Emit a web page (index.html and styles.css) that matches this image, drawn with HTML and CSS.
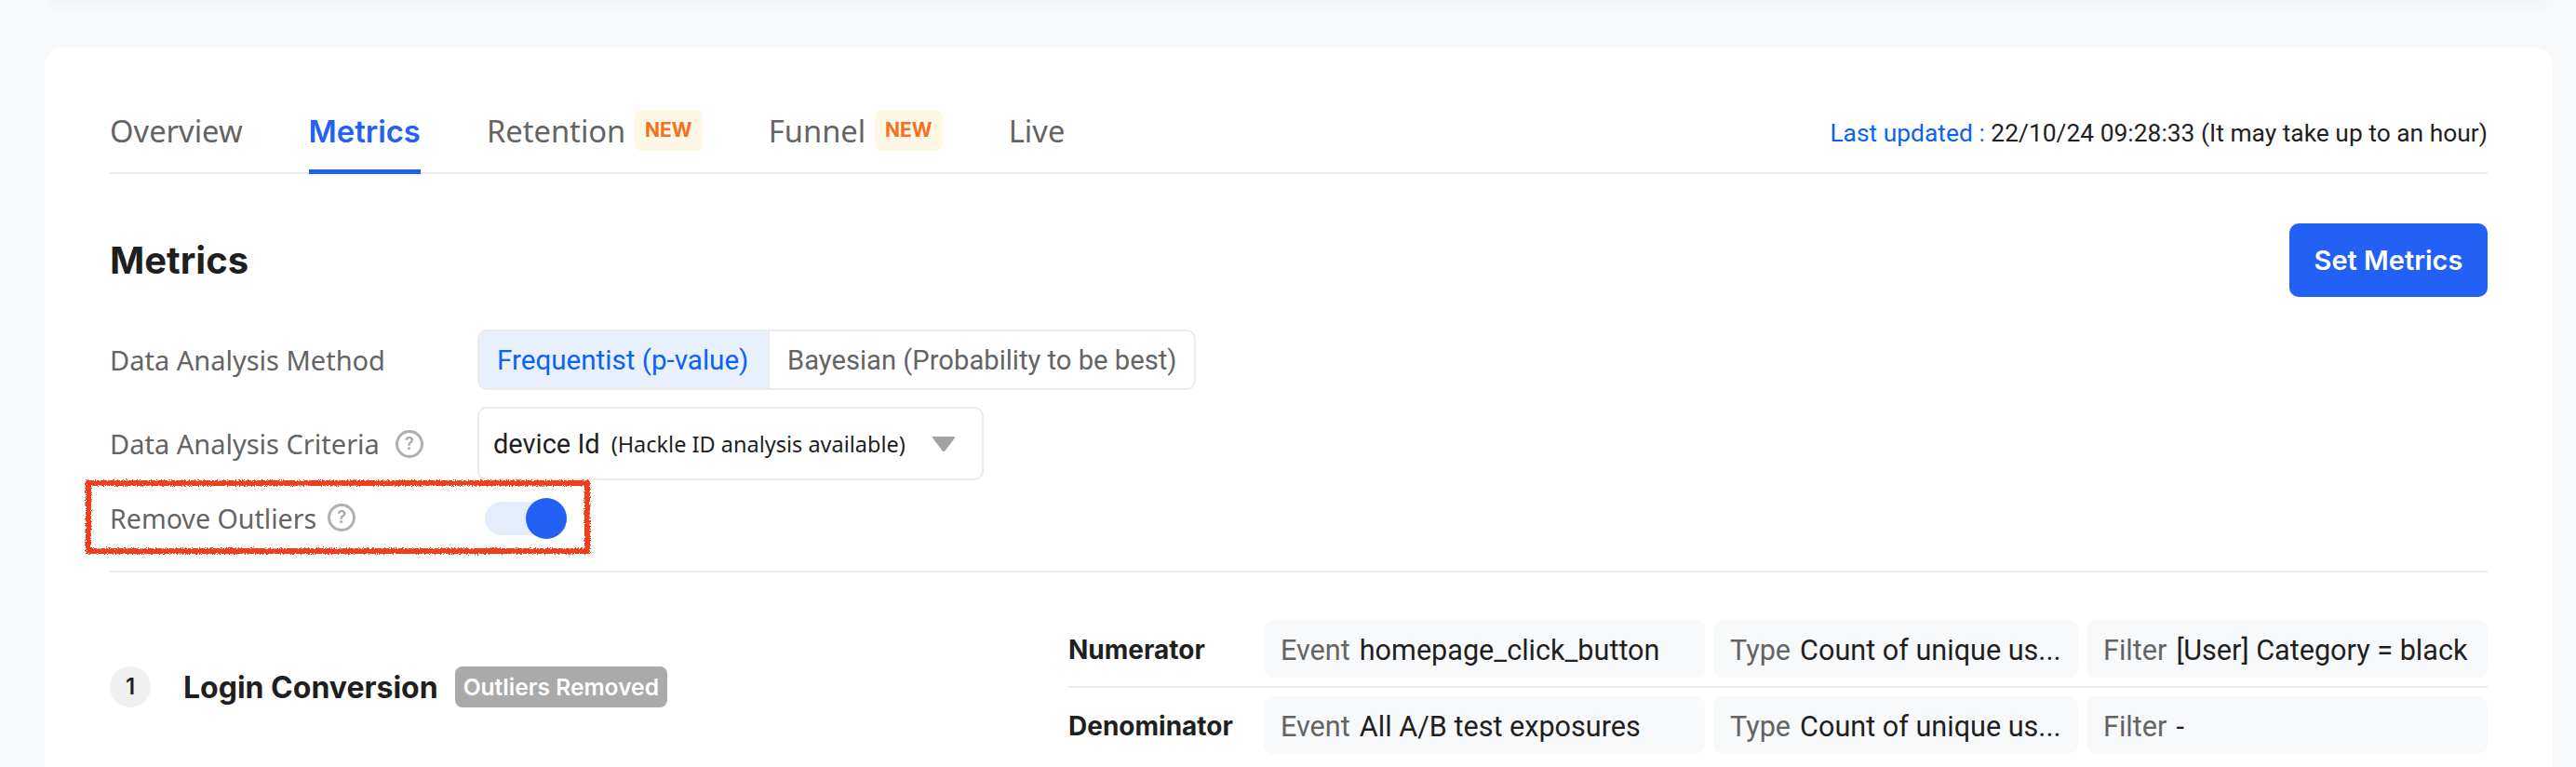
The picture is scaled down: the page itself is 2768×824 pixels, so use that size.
FILE: index.html
```html
<!DOCTYPE html>
<html>
<head>
    <title>Metrics</title>
    <link rel="stylesheet" href="styles.css">
</head>
<body>

<div class="top-strip"></div>

<div class="card">
    <div class="tabs">
        <div class="tab">Overview</div>
        <div class="tab active">Metrics</div>
        <div class="tab">Retention <span class="new-badge">NEW</span></div>
        <div class="tab">Funnel <span class="new-badge">NEW</span></div>
        <div class="tab">Live</div>
        <div class="last-updated"><span class="blue">Last updated : </span>22/10/24 09:28:33 (It may take up to an hour)</div>
    </div>

    <div class="title-row">
        <h1>Metrics</h1>
        <button class="set-btn">Set Metrics</button>
    </div>

    <div class="form-row method-row">
        <div class="form-label">Data Analysis Method</div>
        <div class="segment">
            <div class="segment-item selected">Frequentist (p-value)</div>
            <div class="segment-item">Bayesian (Probability to be best)</div>
        </div>
    </div>

    <div class="form-row criteria-row">
        <div class="form-label">Data Analysis Criteria <span class="help">?</span></div>
        <div class="select">
            <span class="select-main">device Id</span>
            <span class="select-sub">(Hackle ID analysis available)</span>
            <svg class="arrow" width="26" height="18" viewBox="0 0 26 18"><path d="M2 1h22c1 0 1.400 .8 .9 1.600l-10.600 14c-.7 .8-1.900 .8-2.600 0l-10.600-14c-.5-.8-.1-1.600 .9-1.600z" fill="#a3a3a3"/></svg>
        </div>
    </div>

    <div class="form-row outliers-row">
        <div class="form-label">Remove Outliers <span class="help">?</span></div>
        <div class="toggle"><div class="knob"></div></div>
        <svg class="scribble" width="552" height="88" viewBox="0 0 552 88">
            <defs>
                <filter id="rough" x="-2%" y="-10%" width="104%" height="120%">
                    <feTurbulence type="fractalNoise" baseFrequency="0.9" numOctaves="2" seed="4"/>
                    <feDisplacementMap in="SourceGraphic" scale="5"/>
                </filter>
            </defs>
            <rect x="5" y="5" width="536" height="73" fill="none" stroke="#f03c1f" stroke-width="6" filter="url(#rough)"/>
        </svg>
    </div>

    <div class="metric">
        <div class="metric-name">
            <span class="num">1</span>
            <span class="metric-title">Login Conversion</span>
            <span class="removed-badge">Outliers Removed</span>
        </div>
        <div class="metric-detail">
            <div class="detail-row first">
                <div class="detail-label">Numerator</div>
                <div class="chip chip-event"><span class="chip-key">Event</span>homepage_click_button</div>
                <div class="chip chip-type"><span class="chip-key">Type</span>Count of unique us...</div>
                <div class="chip chip-filter"><span class="chip-key">Filter</span>[User] Category = black</div>
            </div>
            <div class="detail-row">
                <div class="detail-label">Denominator</div>
                <div class="chip chip-event"><span class="chip-key">Event</span>All A/B test exposures</div>
                <div class="chip chip-type"><span class="chip-key">Type</span>Count of unique us...</div>
                <div class="chip chip-filter"><span class="chip-key">Filter</span>-</div>
            </div>
        </div>
    </div>
</div>

</body>
</html>
```

FILE: styles.css
```css
html, body {
    height: 824px;
    overflow: hidden;
}

body {
    margin: 0;
    padding: 0 25px 0 48px;
    font-family: Inter, Roboto, "Noto Sans", sans-serif;
    background-color: #f8f9fb;
    color: #1f1f1f;
}

.top-strip {
    height: 0;
    margin: 0 8px;
    box-shadow: 0 0 14px 3px rgba(0, 0, 0, 0.07);
}

.card {
    margin-top: 51px;
    height: 900px;
    padding: 0 70px;
    background-color: #fff;
    border-radius: 20px 20px 0 0;
}

.tabs {
    display: flex;
    align-items: center;
    gap: 71px;
    height: 136px;
    padding-top: 44px;
    box-sizing: border-box;
    border-bottom: 2px solid #ececec;
}

.tab {
    display: flex;
    align-items: center;
    gap: 1px;
    height: 90px;
    box-sizing: border-box;
    font-family: "Noto Sans", sans-serif;
    font-size: 32.7px;
    color: #646464;
    white-space: pre;
}

.tab.active {
    height: 92px;
    margin-bottom: -2px;
    font-family: Inter, sans-serif;
    font-size: 32.8px;
    font-weight: 600;
    color: #2260f6;
    border-bottom: 5px solid #2260f6;
    padding-top: 5px;
}

.new-badge {
    width: 73px;
    height: 44px;
    line-height: 44px;
    text-align: center;
    font-family: Inter, sans-serif;
    font-size: 21px;
    font-weight: 700;
    color: #f5701f;
    background-color: #fff7e5;
    border-radius: 8px;
}

.last-updated {
    margin-left: auto;
    padding-top: 5px;
    font-family: Roboto, sans-serif;
    font-size: 26.4px;
    color: #1f1f1f;
}

.blue {
    color: #0b63f3;
}

.title-row {
    display: flex;
    justify-content: space-between;
    align-items: center;
    margin-top: 53px;
}

h1 {
    margin: 0;
    font-size: 40px;
    font-weight: 700;
}

.set-btn {
    width: 213px;
    height: 79px;
    font-family: inherit;
    font-size: 29px;
    font-weight: 600;
    color: #fff;
    border: none;
    border-radius: 10px;
    background-color: #2260f6;
}

.form-row {
    display: flex;
    align-items: center;
    position: relative;
}

.form-label {
    display: flex;
    align-items: center;
    gap: 12px;
    width: 395px;
    font-family: "Noto Sans", sans-serif;
    font-size: 29px;
    color: #646464;
}

.help {
    width: 24px;
    height: 24px;
    line-height: 24px;
    text-align: center;
    font-family: Inter, sans-serif;
    font-size: 18px;
    font-weight: 600;
    color: #a8a8a8;
    border: 3px solid #b0b0b0;
    border-radius: 50%;
}

.criteria-row .help {
    margin-left: 5px;
}

.outliers-row .form-label {
    padding-top: 2px;
    font-size: 28.6px;
}

.method-row {
    margin-top: 35px;
}

.segment {
    display: flex;
    height: 65px;
    box-sizing: border-box;
    border: 2px solid #ebebeb;
    border-radius: 10px;
    overflow: hidden;
    font-family: Roboto, sans-serif;
    font-size: 29.2px;
    color: #646464;
}

.segment-item {
    display: flex;
    align-items: center;
    padding: 0 19px;
    white-space: nowrap;
}

.segment-item.selected {
    width: 312px;
    box-sizing: border-box;
    font-size: 29.6px;
    color: #0b63f3;
    background-color: #e8f0fd;
    border-right: 2px solid #ebebeb;
}

.criteria-row {
    margin-top: 18px;
}

.select {
    display: flex;
    align-items: center;
    width: 544px;
    height: 79px;
    box-sizing: border-box;
    padding: 0 28px 0 15px;
    border: 2px solid #ebebeb;
    border-radius: 10px;
    white-space: nowrap;
    font-family: "Noto Sans", sans-serif;
}

.select-main {
    font-family: Roboto, sans-serif;
    font-size: 29px;
    margin-right: 12px;
}

.select-sub {
    font-size: 23.5px;
}

.arrow {
    margin-left: auto;
}

.outliers-row {
    height: 78px;
}

.toggle {
    position: relative;
    width: 84px;
    height: 36px;
    margin-left: 8px;
    top: 2px;
    border-radius: 18px;
    background-color: #e5ecfb;
}

.knob {
    position: absolute;
    top: -4px;
    right: -4px;
    width: 44px;
    height: 44px;
    border-radius: 50%;
    background-color: #2260f6;
}

.scribble {
    position: absolute;
    left: -28px;
    top: -2px;
}

.metric {
    display: flex;
    align-items: center;
    margin-top: 19px;
    padding-top: 51px;
    border-top: 2px solid #ececec;
}

.metric-name {
    display: flex;
    align-items: center;
    width: 1030px;
}

.num {
    width: 44px;
    height: 44px;
    line-height: 44px;
    text-align: center;
    font-size: 24px;
    font-weight: 600;
    border-radius: 50%;
    background-color: #f0f0f0;
}

.metric-title {
    margin-left: 35px;
    font-size: 32px;
    font-weight: 700;
}

.removed-badge {
    height: 44px;
    line-height: 44px;
    margin-left: 18px;
    padding: 0 9px;
    font-size: 24.6px;
    font-weight: 600;
    color: #fff;
    background-color: #aaa;
    border-radius: 8px;
}

.metric-detail {
    flex: 1;
}

.detail-row {
    display: flex;
    align-items: center;
    gap: 9px;
}

.detail-row.first {
    padding-bottom: 9px;
    margin-bottom: 9px;
    border-bottom: 2px solid #ececec;
}

.detail-label {
    width: 201px;
    padding-top: 2px;
    font-size: 28px;
    font-weight: 700;
}

.chip {
    display: flex;
    align-items: center;
    height: 62px;
    box-sizing: border-box;
    padding: 2px 18px 0;
    font-family: Roboto, sans-serif;
    font-size: 30.6px;
    white-space: nowrap;
    border-radius: 10px;
    background-color: #f8f9fb;
}

.chip-event {
    width: 474px;
}

.chip-type {
    width: 392px;
}

.chip-filter {
    width: 431px;
}

.chip-key {
    margin-right: 10px;
    color: #646464;
}
```
